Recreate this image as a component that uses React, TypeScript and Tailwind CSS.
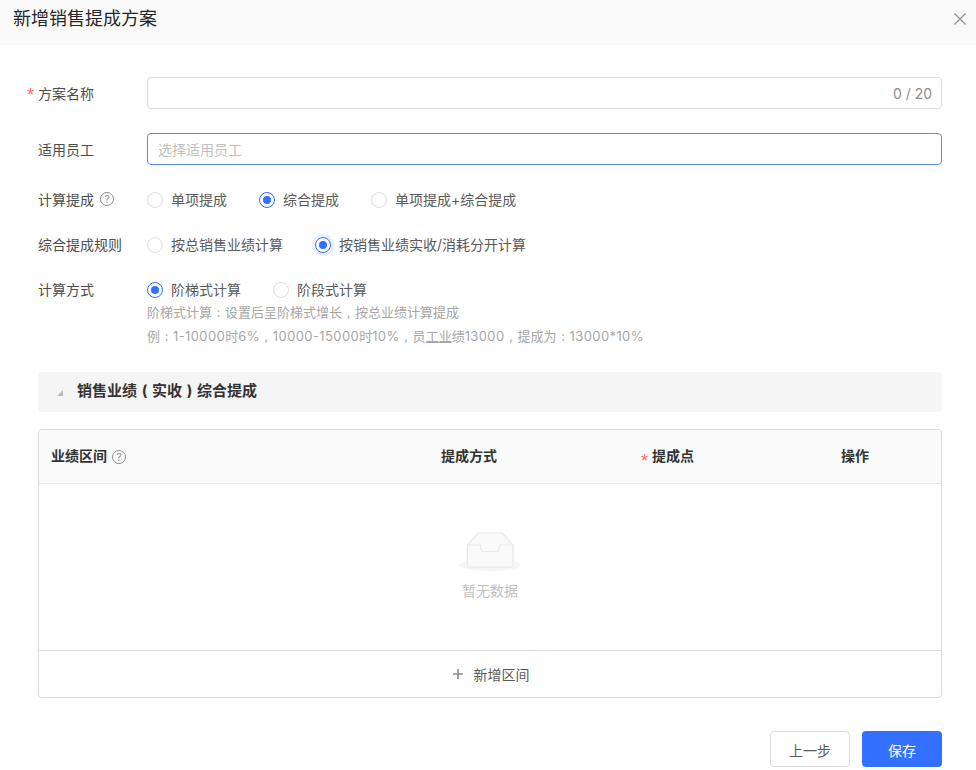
import React from "react";

function P({ children }: { children: React.ReactNode }) {
  return <span className="inline-block w-[1em] text-center">{children}</span>;
}

function L({ children }: { children: React.ReactNode }) {
  return <span className="tracking-[0.4px]">{children}</span>;
}

function Radio({ checked, halo }: { checked?: boolean; halo?: boolean }) {
  return (
    <span
      className={`relative flex h-4 w-4 shrink-0 items-center justify-center rounded-full border bg-white ${
        checked ? "border-[#3370ff]" : "border-[#dcdcdc]"
      } ${halo ? "shadow-[0_0_0_3px_#e9effe]" : ""}`}
    >
      {checked && <span className="h-2 w-2 rounded-full bg-[#3370ff]" />}
    </span>
  );
}

function Opt({ label, checked, halo }: { label: string; checked?: boolean; halo?: boolean }) {
  return (
    <div className="flex items-center gap-2">
      <Radio checked={checked} halo={halo} />
      <span className="leading-5 text-[#595959]">{label}</span>
    </div>
  );
}

function Help({ className = "" }: { className?: string }) {
  return (
    <span className={`flex h-[14px] w-[14px] items-center justify-center rounded-full border border-[#8c8c8c] text-[10px] leading-none text-[#8c8c8c] ${className}`}>
      ?
    </span>
  );
}

function Star({ className = "" }: { className?: string }) {
  return <span className={`absolute text-[18px] font-normal leading-none text-[#ff6b6b] font-['Liberation_Sans',sans-serif] ${className}`}>*</span>;
}

function Row({ label, required, help, children, className = "", labelClass = "" }: { label: string; required?: boolean; help?: boolean; children: React.ReactNode; className?: string; labelClass?: string }) {
  return (
    <div className={`flex ${className}`}>
      <div className={`relative flex w-[109px] shrink-0 items-center gap-[6px] text-[#4d4d4d] ${labelClass}`}>
        {required && <Star className="left-[-11px] top-[9px]" />}
        <span>{label}</span>
        {help && <Help className="mt-[-2px]" />}
      </div>
      <div className="flex-1">{children}</div>
    </div>
  );
}

export default function App() {
  return (
    <div className="h-[770px] w-[976px] overflow-hidden bg-white text-[14px] font-['Inter','Noto_Sans_CJK_SC',sans-serif]">
      <header className="flex h-[45px] items-center justify-between bg-[#fafafa] pl-[13px] pr-[8px]">
        <h1 className="mt-[-7px] text-[18px] font-normal leading-6 text-[#262626]">新增销售提成方案</h1>
        <svg width="14" height="14" viewBox="0 0 14 14" className="mr-[1px] mt-[-7px]">
          <path d="M1.5 1.5 12.5 12.5M12.5 1.5 1.5 12.5" stroke="#8c8c8c" strokeWidth="1.2" fill="none" />
        </svg>
      </header>

      <main className="pl-[38px] pr-[34px] pt-[32px]">
        <Row label="方案名称" required>
          <div className="flex h-8 items-center justify-end rounded border border-[#dcdcdc] px-[9px] text-[14px] text-[#8c8c8c]">0 / 20</div>
        </Row>
        <Row label="适用员工" className="mt-6">
          <div className="flex h-8 items-center rounded border border-[#5b8def] px-[10px] text-[14px] text-[#bfbfbf]">选择适用员工</div>
        </Row>
        <Row label="计算提成" help labelClass="mt-[-1px]" className="mt-[25px] h-5">
          <div className="flex items-center gap-8">
            <Opt label="单项提成" />
            <Opt label="综合提成" checked />
            <Opt label="单项提成+综合提成" />
          </div>
        </Row>
        <Row label="综合提成规则" labelClass="mt-[-1px]" className="mt-[25px] h-5">
          <div className="flex items-center gap-8">
            <Opt label="按总销售业绩计算" />
            <Opt label="按销售业绩实收/消耗分开计算" checked halo />
          </div>
        </Row>
        <Row label="计算方式" labelClass="mt-[-1px]" className="mt-[25px] items-start">
          <div className="flex items-center gap-8">
            <Opt label="阶梯式计算" checked />
            <Opt label="阶段式计算" />
          </div>
          <p className="text-[13px] leading-6 text-[#a6a6a6]">
            阶梯式计算<P>:</P>设置后呈阶梯式增长<P>,</P>按总业绩计算提成
          </p>
          <p className="text-[13px] leading-6 text-[#a6a6a6]">
            例<P>:</P><L>1-10000</L>时<L>6%</L><P>,</P><L>10000-15000</L>时<L>10%</L><P>,</P>员<span className="underline">工业</span>绩<L>13000</L><P>,</P>提成为<P>:</P><L>13000*10%</L>
          </p>
        </Row>

        <div className="mt-[24px] flex h-10 items-center rounded bg-[#f5f5f5] pl-[19px]">
          <svg width="6" height="6" viewBox="0 0 6 6" className="mt-[2px]">
            <path d="M6 0V6H0Z" fill="#bdbdbd" />
          </svg>
          <h2 className="ml-[14px] mt-[-1px] text-[15px] font-bold text-[#333333]">
            销售业绩<P>(</P>实收<P>)</P>综合提成
          </h2>
        </div>

        <section className="mt-[17px] h-[269px] rounded border border-[#dcdcdc]">
          <div className="grid h-[54px] grid-cols-[390px_199px_201px_1fr] items-center rounded-t border-b border-[#e5e5e5] bg-[#fafafa] font-bold text-[#333333]">
            <div className="flex items-center gap-[5px] pl-3">
              <span className="mt-[-3px]">业绩区间</span>
              <Help className="font-normal" />
            </div>
            <div className="mt-[-3px] pl-3">提成方式</div>
            <div className="relative mt-[-3px] pl-6">
              <Star className="left-[13px] top-[7px]" />
              提成点
            </div>
            <div className="mt-[-3px] pl-3">操作</div>
          </div>
          <div className="flex h-[167px] flex-col items-center border-b border-[#dcdcdc] pt-[48px]">
            <svg width="64" height="42" viewBox="0 0 64 42">
              <ellipse cx="32" cy="33" rx="31" ry="6" fill="#f5f5f5" />
              <path d="M20 1H44L55 13V33a2 2 0 0 1-2 2H11.500a2 2 0 0 1-2-2V13Z" fill="#fafafa" stroke="#e8e8e8" strokeWidth="1.2" />
              <path d="M9.500 13H21a1.500 1.500 0 0 1 1.500 1.500c0 3 1 5 3 5H38.500c2 0 3-2 3-5A1.500 1.500 0 0 1 43 13H55" fill="none" stroke="#e8e8e8" strokeWidth="1.2" />
            </svg>
            <span className="mt-[7px] text-[14px] leading-5 text-[#bfbfbf]">暂无数据</span>
          </div>
          <div className="flex h-[46px] items-center justify-center gap-[10px] text-[#595959]">
            <svg width="12" height="12" viewBox="0 0 12 12" className="ml-[1px]">
              <path d="M6 1V11M1 6H11" stroke="#8c8c8c" strokeWidth="1.6" fill="none" />
            </svg>
            <span>新增区间</span>
          </div>
        </section>

        <footer className="mt-[33px] flex justify-end gap-3">
          <button className="h-9 w-20 rounded border border-[#dcdcdc] bg-white pt-[2px] text-[#595959]">上一步</button>
          <button className="h-9 w-20 rounded bg-[#3370ff] pt-[2px] text-white">保存</button>
        </footer>
      </main>
    </div>
  );
}
